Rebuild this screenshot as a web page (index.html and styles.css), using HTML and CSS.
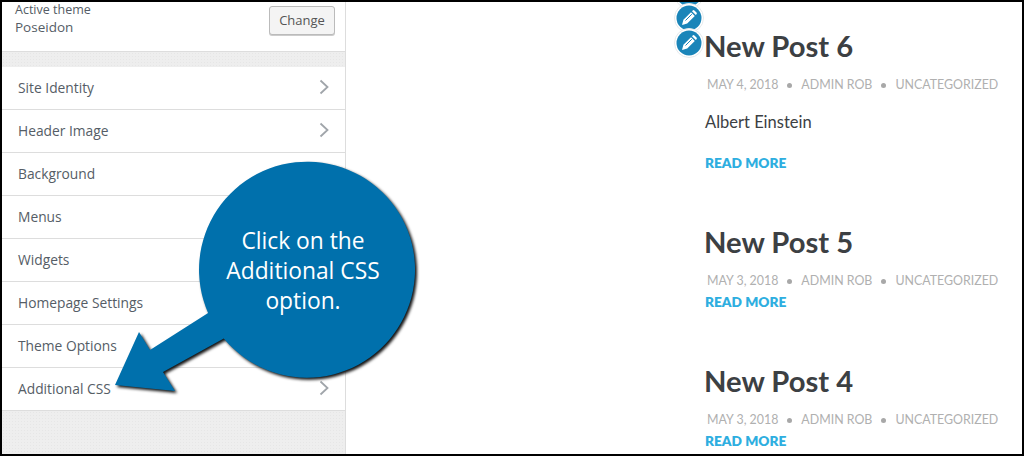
FILE: index.html
```html
<!DOCTYPE html>
<html lang="en">
<head>
<meta charset="utf-8">
<title>Customizer</title>
<link rel="stylesheet" href="styles.css">
</head>
<body>
<div class="frame">
  <aside class="sidebar">
    <section class="theme">
      <div class="theme-info">
        <span class="theme-label">Active theme</span>
        <span class="theme-name">Poseidon</span>
      </div>
      <button class="change">Change</button>
    </section>
    <div class="gap"></div>
    <ul class="menu">
      <li class="row">Site Identity<svg class="chev" viewBox="0 0 10 16"><path d="M1.500 1.500 8.500 8l-7 6.500"/></svg></li>
      <li class="row">Header Image<svg class="chev" viewBox="0 0 10 16"><path d="M1.500 1.500 8.500 8l-7 6.500"/></svg></li>
      <li class="row">Background<svg class="chev" viewBox="0 0 10 16"><path d="M1.500 1.500 8.500 8l-7 6.500"/></svg></li>
      <li class="row">Menus<svg class="chev" viewBox="0 0 10 16"><path d="M1.500 1.500 8.500 8l-7 6.500"/></svg></li>
      <li class="row">Widgets<svg class="chev" viewBox="0 0 10 16"><path d="M1.500 1.500 8.500 8l-7 6.500"/></svg></li>
      <li class="row">Homepage Settings<svg class="chev" viewBox="0 0 10 16"><path d="M1.500 1.500 8.500 8l-7 6.500"/></svg></li>
      <li class="row">Theme Options<svg class="chev" viewBox="0 0 10 16"><path d="M1.500 1.500 8.500 8l-7 6.500"/></svg></li>
      <li class="row">Additional CSS<svg class="chev" viewBox="0 0 10 16"><path d="M1.500 1.500 8.500 8l-7 6.500"/></svg></li>
    </ul>
    <div class="gap fill"></div>
  </aside>
  <main class="preview">
    <article class="post first">
      <h2 class="title">New Post 6</h2>
      <p class="meta"><span>May 4, 2018</span><i></i><span>Admin Rob</span><i></i><span>Uncategorized</span></p>
      <p class="excerpt">Albert Einstein</p>
      <a class="more">Read More</a>
    </article>
    <article class="post second">
      <h2 class="title">New Post 5</h2>
      <p class="meta"><span>May 3, 2018</span><i></i><span>Admin Rob</span><i></i><span>Uncategorized</span></p>
      <a class="more">Read More</a>
    </article>
    <article class="post third">
      <h2 class="title">New Post 4</h2>
      <p class="meta"><span>May 3, 2018</span><i></i><span>Admin Rob</span><i></i><span>Uncategorized</span></p>
      <a class="more">Read More</a>
    </article>
  </main>

  <svg class="pen pen-a" viewBox="0 0 30 30"><circle cx="15" cy="15" r="14.500" class="halo"/><circle cx="15" cy="15" r="12.500" class="disc"/><path class="nib" d="M8 22l1.400-5.200 7.600-7.600 3.800 3.800-7.600 7.600zM18 8.200l.7-.7a1.200 1.200 0 0 1 1.700 0l2.100 2.100a1.200 1.200 0 0 1 0 1.700l-.7.700z"/><path class="slit" d="M11.500 17.500l6.300-6.300"/></svg>
  <svg class="pen pen-b" viewBox="0 0 30 30"><circle cx="15" cy="15" r="14.500" class="halo"/><circle cx="15" cy="15" r="12.500" class="disc"/><path class="nib" d="M8 22l1.400-5.200 7.600-7.600 3.800 3.800-7.600 7.600zM18 8.200l.7-.7a1.200 1.200 0 0 1 1.700 0l2.100 2.100a1.200 1.200 0 0 1 0 1.700l-.7.700z"/><path class="slit" d="M11.500 17.500l6.300-6.300"/></svg>
  <svg class="pen pen-c" viewBox="0 0 30 30"><circle cx="15" cy="15" r="14.500" class="halo"/><circle cx="15" cy="15" r="12.500" class="disc"/><path class="nib" d="M8 22l1.400-5.200 7.600-7.600 3.800 3.800-7.600 7.600zM18 8.200l.7-.7a1.200 1.200 0 0 1 1.700 0l2.100 2.100a1.200 1.200 0 0 1 0 1.700l-.7.700z"/><path class="slit" d="M11.500 17.500l6.300-6.300"/></svg>

  <div class="callout">
    <svg class="bubble" viewBox="0 0 330 260"><path d="M108.100 163 A108 108 0 1 1 123.800 188.500 L63 222 75 241 15 235 39 182 50 200Z"/></svg>
    <p class="callout-text">Click on the<br>Additional CSS<br>option.</p>
  </div>
</div>
</body>
</html>
```
FILE: styles.css
```css
* { box-sizing: border-box; }
html, body { margin: 0; padding: 0; background: #fff; }
.frame {
  position: relative;
  width: 1024px;
  height: 456px;
  border: 2px solid #000;
  display: flex;
  overflow: hidden;
  background: #fff;
}
.sidebar {
  width: 344px;
  flex: none;
  display: flex;
  flex-direction: column;
  border-right: 1px solid #ddd;
  font-family: "Open Sans", sans-serif;
  color: #555d66;
}
.theme {
  height: 50px;
  flex: none;
  display: flex;
  justify-content: space-between;
  align-items: flex-start;
  padding: 4px 10px 0 13px;
  border-bottom: 1px solid #ddd;
}
.theme-info { display: flex; flex-direction: column; margin-top: -5px; }
.theme-label { font-size: 12.500px; line-height: 17px; }
.theme-name { font-size: 13.500px; line-height: 18px; font-weight: 500; }
.change {
  width: 66px;
  height: 29px;
  font: 13px/25px "Open Sans", sans-serif;
  color: #555;
  background: #f4f4f4;
  border: 1px solid #bbb;
  border-radius: 3px;
  box-shadow: 0 1px 0 #ccc;
  padding: 0;
}
.gap {
  height: 15px;
  flex: none;
  background-color: #eee;
  background-image: radial-gradient(#e6e6e6 0.7px, transparent 0.8px);
  background-size: 3px 3px;
}
.gap.fill { flex: 1; }
.menu { list-style: none; margin: 0; padding: 0; }
.row {
  height: 43px;
  display: flex;
  align-items: center;
  justify-content: space-between;
  padding: 0 16px 2px 16px;
  font-size: 13.800px;
  font-weight: 500;
  border-bottom: 1px solid #ddd;
  background: #fff;
}
.chev { width: 10px; height: 16px; fill: none; stroke: #a0a5aa; stroke-width: 1.800; }
.preview {
  flex: 1;
  padding-left: 359px;
  color: #3c4043;
  overflow: hidden;
}
.post { display: flex; flex-direction: column; align-items: flex-start; }
.first { margin-top: 26px; }
.second { margin-top: 52px; }
.third { margin-top: 52px; }
.title {
  margin: 0 0 0 -1px;
  font-family: Lato, sans-serif;
  font-weight: 700;
  font-size: 29.200px;
  line-height: 36px;
  color: #3c4043;
}
.meta {
  margin: 12px 0 0 2px;
  display: flex;
  align-items: center;
  gap: 9px;
  font-family: Lato, sans-serif;
  font-size: 12.400px;
  line-height: 18px;
  color: #b0b0b0;
  text-transform: uppercase;
  white-space: nowrap;
}
.meta i { width: 5px; height: 5px; border-radius: 50%; background: #a8a8a8; }
.excerpt {
  margin: 18px 0 0;
  font-family: Lato, sans-serif;
  font-size: 16.500px;
  line-height: 20px;
}
.more {
  font-family: Lato, sans-serif;
  font-weight: 800;
  font-size: 13.700px;
  line-height: 18px;
  color: #2eaee0;
  text-transform: uppercase;
  margin-top: 3px;
}
.first .more { margin-top: 22px; }
.pen { position: absolute; width: 30px; height: 30px; left: 672px; }
.pen-a { top: -23px; }
.pen-b { top: 1px; }
.pen-c { top: 26px; }
.halo { fill: #fff; stroke: #e6eaec; stroke-width: 1; }
.disc { fill: #1a85b9; }
.nib { fill: #fff; }
.slit { fill: none; stroke: #1a85b9; stroke-width: 1; }
.callout { position: absolute; left: 98px; top: 148px; width: 330px; height: 260px; }
.bubble {
  position: absolute;
  inset: 0;
  width: 330px;
  height: 260px;
  overflow: visible;
  fill: #0070ac;
  filter: drop-shadow(2px 2px 1.500px #111);
}
.callout-text {
  position: absolute;
  left: 95px;
  top: 76px;
  width: 216px;
  margin: 0;
  text-align: center;
  font-family: "Open Sans", sans-serif;
  font-size: 22.800px;
  line-height: 30px;
  color: #fff;
}
```
